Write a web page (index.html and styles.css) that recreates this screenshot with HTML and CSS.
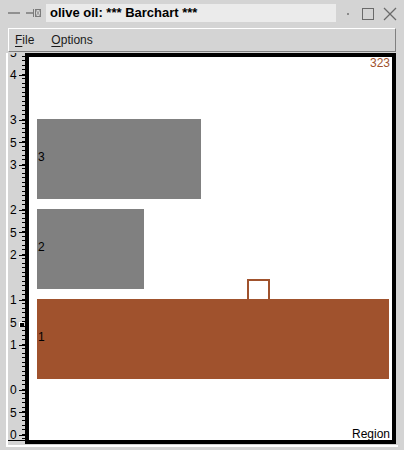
FILE: index.html
```html
<!DOCTYPE html>
<html lang="en">
<head>
  <meta charset="UTF-8" />
  <title>olive oil: *** Barchart ***</title>
  <link rel="stylesheet" href="styles.css">
</head>
<body>

  <div class="titlebar">
    <svg class="tb-left" width="46" height="26" viewBox="0 0 46 26">
      <line x1="8" y1="13" x2="20" y2="13" stroke="#7a7a7a" stroke-width="1.5" />
      <line x1="26" y1="13" x2="33" y2="13" stroke="#7a7a7a" stroke-width="1.5" />
      <line x1="33.5" y1="9" x2="33.5" y2="17" stroke="#7a7a7a" />
      <rect x="35.5" y="9.5" width="5" height="7" fill="none" stroke="#7a7a7a" />
      <line x1="36" y1="10" x2="40" y2="16" stroke="#9a9a9a" />
      <line x1="40" y1="10" x2="36" y2="16" stroke="#9a9a9a" />
    </svg>
    <div class="title">olive oil: *** Barchart ***</div>
    <svg class="tb-right" width="68" height="26" viewBox="0 0 68 26">
      <rect x="11" y="13" width="2" height="2" fill="#8a8a8a" />
      <rect x="26.5" y="8.5" width="11" height="11" fill="none" stroke="#6a6a6a" />
      <line x1="48" y1="8" x2="60" y2="20" stroke="#6a6a6a" stroke-width="1.2" />
      <line x1="60" y1="8" x2="48" y2="20" stroke="#6a6a6a" stroke-width="1.2" />
    </svg>
  </div>

  <div class="menubar">
    <span class="menu"><u>F</u>ile</span>
    <span class="menu"><u>O</u>ptions</span>
  </div>

  <div class="workspace">
    <div class="ruler">
      <div class="scale">
        <div class="slot"><span class="num">5</span><span class="tick"></span></div>
        <div class="slot"><span class="num">4</span><span class="tick"></span></div>
        <div class="slot"><span class="num"></span></div>
        <div class="slot"><span class="num">3</span><span class="tick"></span></div>
        <div class="slot"><span class="num">5</span><span class="tick"></span></div>
        <div class="slot"><span class="num">3</span><span class="tick"></span></div>
        <div class="slot"><span class="num"></span></div>
        <div class="slot"><span class="num">2</span><span class="tick"></span></div>
        <div class="slot"><span class="num">5</span><span class="tick"></span></div>
        <div class="slot"><span class="num">2</span><span class="tick"></span></div>
        <div class="slot"><span class="num"></span></div>
        <div class="slot"><span class="num">1</span><span class="tick"></span></div>
        <div class="slot"><span class="num">5</span><span class="pointer"></span></div>
        <div class="slot"><span class="num">1</span><span class="tick"></span></div>
        <div class="slot"><span class="num"></span></div>
        <div class="slot"><span class="num">0</span><span class="tick"></span></div>
        <div class="slot"><span class="num">5</span><span class="tick"></span></div>
        <div class="slot"><span class="num">0</span><span class="tick"></span></div>
      </div>
    </div>

    <div class="canvas">
      <div class="count">323</div>
      <div class="bars">
        <div class="bar gray" style="width: 164px">3</div>
        <div class="bar gray" style="width: 107px">2</div>
        <div class="bar brown" style="width: 352px">1<span class="marker"></span></div>
      </div>
      <div class="region">Region</div>
    </div>
  </div>

</body>
</html>
```

FILE: styles.css
```css
body {
  margin: 0;
  width: 404px;
  height: 450px;
  overflow: hidden;
  background-color: #d4d4d4;
  font-family: 'Liberation Sans', Arial, sans-serif;
  color: #000;
}

/* window title */
.titlebar {
  display: flex;
  height: 26px;
}

.title {
  width: 290px;
  height: 18px;
  margin-top: 4px;
  padding-left: 4px;
  box-sizing: border-box;
  background-color: #ebebeb;
  font-weight: bold;
  font-size: 13px;
  line-height: 18px;
  white-space: nowrap;
}

/* menu */
.menubar {
  display: flex;
  gap: 17px;
  height: 24px;
  margin: 2px 8px 0 8px;
  padding-left: 6px;
  box-sizing: border-box;
  border-top: 1px solid #fff;
  border-left: 1px solid #fff;
  border-bottom: 1px solid #808080;
  border-right: 1px solid #808080;
  font-size: 12px;
  line-height: 22px;
  color: #1a1a1a;
}

.menu u {
  text-underline-offset: 2px;
}

/* ruler + chart */
.workspace {
  display: flex;
  margin: 1px 0 0 6px;
  padding-bottom: 1px;
  border-left: 2px solid #fff;
  border-bottom: 2px solid #fff;
  width: 390px;
}

.ruler {
  width: 17px;
  height: 387px;
  overflow: hidden;
  border-bottom: 1px solid #000;
  background-image: linear-gradient(to bottom, #000 0, #000 1px, transparent 1px, transparent 4px, #000 4px, #000 5px, transparent 5px);
  background-size: 3px 9px;
  background-position: 14px 3px;
  background-repeat: repeat-y;
}

.scale {
  margin-top: -11.75px;
}

.slot {
  display: flex;
  align-items: center;
  height: 22.5px;
  font-size: 12px;
  line-height: 12px;
}

.num {
  flex: 1;
  padding-left: 2px;
}

.tick {
  width: 6px;
  height: 1px;
  background-color: #000;
}

.pointer {
  width: 5px;
  height: 5px;
  margin-right: 1px;
  margin-top: 3px;
  box-sizing: border-box;
  background-color: #000;
  box-shadow: inset 1px 1px 0 #fff;
}

.canvas {
  display: flex;
  flex-direction: column;
  width: 371px;
  height: 391px;
  box-sizing: border-box;
  border: 4px solid #000;
  background-color: #fff;
  font-size: 12px;
  line-height: 12px;
}

.count {
  text-align: right;
  padding-right: 2px;
  color: #a0522d;
}

.bars {
  display: flex;
  flex-direction: column;
  align-items: flex-start;
  gap: 10px;
  margin-top: 50px;
  padding-left: 8px;
}

.bar {
  display: flex;
  align-items: center;
  height: 80px;
  padding: 0 0 5px 1px;
  box-sizing: border-box;
}

.gray {
  background-color: #808080;
}

.brown {
  position: relative;
  background-color: #a0522d;
}

.marker {
  position: absolute;
  left: 210px;
  bottom: 100%;
  width: 23px;
  height: 20px;
  box-sizing: border-box;
  border: 2px solid #a0522d;
  border-bottom: none;
}

.region {
  margin-top: auto;
  text-align: right;
  padding-right: 2px;
}
```
